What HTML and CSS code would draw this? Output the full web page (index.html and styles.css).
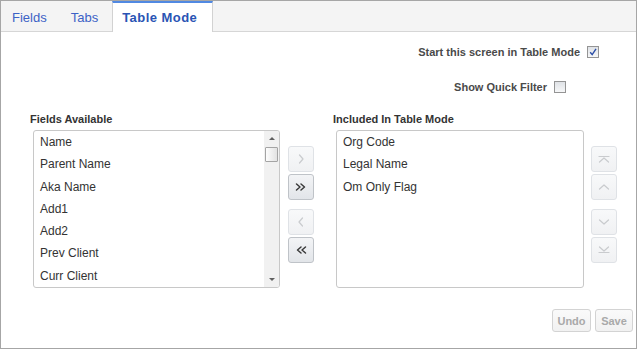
FILE: index.html
```html
<!DOCTYPE html>
<html>
<head>
<meta charset="utf-8">
<link rel="stylesheet" href="styles.css">
</head>
<body>
<div class="frame">
  <div class="tabbar">
    <div class="tab tab-first">Fields</div>
    <div class="tab">Tabs</div>
    <div class="tab tab-active">Table Mode</div>
  </div>
  <div class="content">
    <div class="option option-start">
      <span class="option-label">Start this screen in Table Mode</span>
      <span class="checkbox"><svg width="10" height="10" viewBox="0 0 10 10"><polyline points="2.2,5.2 4.2,7.6 8,1.8" fill="none" stroke="#2b4ea6" stroke-width="1.4"/></svg></span>
    </div>
    <div class="option option-filter">
      <span class="option-label">Show Quick Filter</span>
      <span class="checkbox"></span>
    </div>
    <div class="panes">
      <div class="pane pane-left">
        <div class="pane-title">Fields Available</div>
        <div class="listbox listbox-left">
          <ul class="items">
            <li>Name</li>
            <li>Parent Name</li>
            <li>Aka Name</li>
            <li>Add1</li>
            <li>Add2</li>
            <li>Prev Client</li>
            <li>Curr Client</li>
          </ul>
          <div class="scrollbar">
            <div class="sb-arrow"><span class="tri-up"></span></div>
            <div class="sb-thumb"></div>
            <div class="sb-space"></div>
            <div class="sb-arrow"><span class="tri-down"></span></div>
          </div>
        </div>
      </div>
      <div class="btncol btncol-move">
        <div class="btngroup">
          <span class="ibtn ibtn-off"><svg width="24" height="24" viewBox="0 0 24 24"><polyline points="10.5,8 14,12 10.5,16"/></svg></span>
          <span class="ibtn ibtn-on"><svg width="24" height="24" viewBox="0 0 24 24"><polyline points="7.5,9 11,12 7.5,15"/><polyline points="12,9 15.5,12 12,15"/></svg></span>
        </div>
        <div class="btngroup">
          <span class="ibtn ibtn-off"><svg width="24" height="24" viewBox="0 0 24 24"><polyline points="13.5,8 10,12 13.5,16"/></svg></span>
          <span class="ibtn ibtn-on"><svg width="24" height="24" viewBox="0 0 24 24"><polyline points="12,9 8.5,12 12,15"/><polyline points="16.5,9 13,12 16.5,15"/></svg></span>
        </div>
      </div>
      <div class="pane pane-right">
        <div class="pane-title">Included In Table Mode</div>
        <div class="listbox listbox-right">
          <ul class="items">
            <li>Org Code</li>
            <li>Legal Name</li>
            <li>Om Only Flag</li>
          </ul>
        </div>
      </div>
      <div class="btncol btncol-order">
        <div class="btngroup">
          <span class="ibtn ibtn-off"><svg width="24" height="24" viewBox="0 0 24 24"><line x1="7" y1="9.5" x2="17" y2="9.5"/><polyline points="7.5,15 12,11 16.5,15"/></svg></span>
          <span class="ibtn ibtn-off"><svg width="24" height="24" viewBox="0 0 24 24"><polyline points="7.5,14 12,10 16.5,14"/></svg></span>
        </div>
        <div class="btngroup">
          <span class="ibtn ibtn-off"><svg width="24" height="24" viewBox="0 0 24 24"><polyline points="7.5,10 12,14 16.5,10"/></svg></span>
          <span class="ibtn ibtn-off"><svg width="24" height="24" viewBox="0 0 24 24"><polyline points="7.5,9 12,13 16.5,9"/><line x1="7" y1="14.5" x2="17" y2="14.5"/></svg></span>
        </div>
      </div>
    </div>
    <div class="footer">
      <button class="tbtn tbtn-undo">Undo</button>
      <button class="tbtn tbtn-save">Save</button>
    </div>
  </div>
</div>
</body>
</html>
```
FILE: styles.css
```css
html, body {
  margin: 0;
  padding: 0;
  background: #ffffff;
}
body {
  font-family: "Liberation Sans", Arial, sans-serif;
  width: 639px;
  height: 352px;
  overflow: hidden;
}
.frame {
  width: 637px;
  height: 349px;
  box-sizing: border-box;
  border: 1px solid #a6a6a6;
  display: flex;
  flex-direction: column;
  background: #ffffff;
}
.tabbar {
  height: 31px;
  box-sizing: border-box;
  border-bottom: 1px solid #d6d6d6;
  background: #f4f4f4;
  display: flex;
  align-items: flex-start;
  flex: none;
}
.tab {
  font-size: 13px;
  color: #3c62c6;
  padding: 3px 12px 0 12px;
  line-height: 27px;
  height: 30px;
  box-sizing: border-box;
  white-space: nowrap;
}
.tab-first {
  padding-left: 11px;
}
.tab-active {
  margin-left: 2px;
  font-weight: bold;
  color: #2a54b4;
  letter-spacing: 0.45px;
  background: #ffffff;
  border-top: 2px solid #5189e2;
  border-left: 1px solid #d2d2d2;
  border-right: 1px solid #d2d2d2;
  padding: 1px 15px 0 9px;
  height: 31px;
  margin-bottom: -1px;
}
.content {
  flex: 1;
  display: flex;
  flex-direction: column;
}
.option {
  display: flex;
  justify-content: flex-end;
  align-items: center;
  gap: 7px;
  height: 14px;
}
.option-start {
  margin-top: 13px;
  padding-right: 37px;
}
.option-filter {
  margin-top: 21px;
  padding-right: 70px;
}
.option-label {
  font-size: 11px;
  font-weight: bold;
  color: #4a4a4a;
  line-height: 14px;
}
.checkbox {
  width: 12px;
  height: 12px;
  box-sizing: border-box;
  border: 1px solid #949494;
  background: linear-gradient(#dfe2e6, #f6f7f8);
  display: flex;
  align-items: center;
  justify-content: center;
}
.panes {
  display: flex;
  align-items: flex-start;
  margin-top: 18px;
  padding-left: 29px;
}
.pane {
  display: flex;
  flex-direction: column;
}
.pane-left {
  width: 250px;
}
.pane-right {
  width: 251px;
  margin-left: 19px;
}
.pane-title {
  font-size: 11px;
  font-weight: bold;
  color: #333333;
  line-height: 14px;
  height: 14px;
}
.listbox {
  margin-top: 4px;
  margin-left: 3px;
  height: 158px;
  box-sizing: border-box;
  border: 1px solid #c8c8c8;
  border-radius: 3px;
  background: #ffffff;
  display: flex;
  overflow: hidden;
}
.items {
  flex: 1;
  list-style: none;
  margin: 0;
  padding: 0 0 0 6px;
  font-size: 12px;
  line-height: 22.3px;
  color: #333333;
}
.scrollbar {
  width: 15px;
  background: #f1f1f1;
  display: flex;
  flex-direction: column;
}
.sb-arrow {
  height: 15px;
  display: flex;
  align-items: center;
  justify-content: center;
}
.tri-up {
  width: 0;
  height: 0;
  border-left: 3px solid transparent;
  border-right: 3px solid transparent;
  border-bottom: 3px solid #606060;
}
.tri-down {
  width: 0;
  height: 0;
  border-left: 3px solid transparent;
  border-right: 3px solid transparent;
  border-top: 3px solid #606060;
}
.sb-thumb {
  height: 15px;
  margin: 1px 1px 0 1px;
  box-sizing: border-box;
  border: 1px solid #a4a4a4;
  border-radius: 1px;
  background: linear-gradient(to right, #fdfdfd, #e2e2e2);
}
.sb-space {
  flex: 1;
}
.btncol {
  display: flex;
  flex-direction: column;
  gap: 9px;
  margin-top: 34px;
  width: 26px;
}
.btncol-move {
  margin-left: 8px;
}
.btncol-order {
  margin-left: 7px;
}
.btngroup {
  display: flex;
  flex-direction: column;
  gap: 2px;
}
.ibtn {
  width: 26px;
  height: 26px;
  box-sizing: border-box;
  border-radius: 3px;
  display: flex;
  align-items: center;
  justify-content: center;
}
.ibtn svg {
  fill: none;
  stroke-linecap: round;
  stroke-linejoin: round;
}
.ibtn-off {
  border: 1px solid #dfe2e6;
  background: linear-gradient(#f8f9fa, #f0f1f3);
}
.ibtn-off svg {
  stroke: #c9cbce;
  stroke-width: 1.2;
}
.ibtn-on {
  border: 1px solid #bfc3c8;
  background: linear-gradient(#f3f4f6, #e2e5e9);
}
.ibtn-on svg {
  stroke: #3a3a3a;
  stroke-width: 1.5;
}
.footer {
  display: flex;
  justify-content: flex-end;
  gap: 4px;
  margin-top: 21px;
  padding-right: 3px;
}
.tbtn {
  height: 23px;
  box-sizing: border-box;
  padding: 0;
  border: 1px solid #d3d3d3;
  border-radius: 3px;
  background: linear-gradient(#fafafa, #f1f1f1);
  font-family: "Liberation Sans", Arial, sans-serif;
  font-size: 11px;
  font-weight: bold;
  color: #a9a9a9;
}
.tbtn-undo {
  width: 39px;
}
.tbtn-save {
  width: 38px;
}
```
